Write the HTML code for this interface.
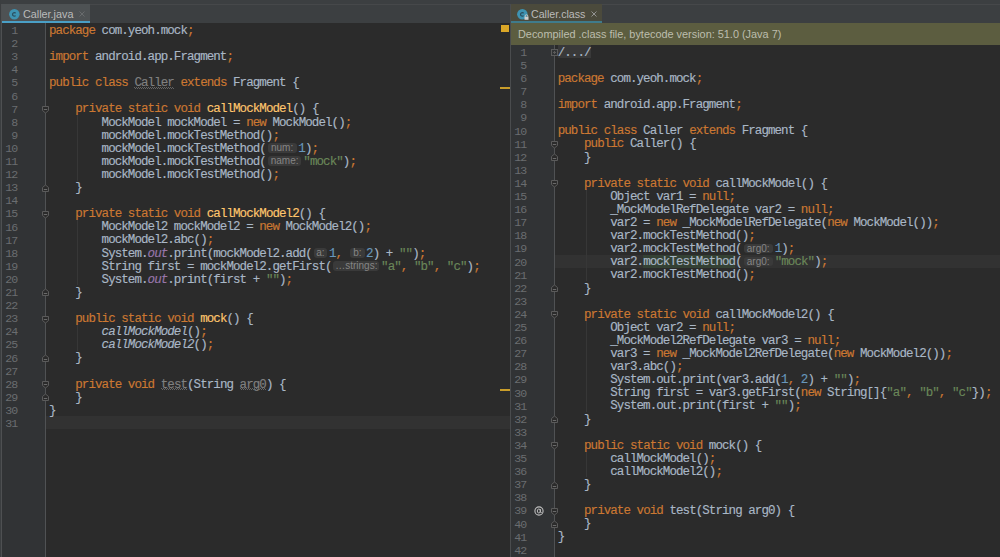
<!DOCTYPE html><html><head><meta charset="utf-8"><style>
*{margin:0;padding:0;box-sizing:border-box}
html,body{width:1000px;height:557px;overflow:hidden;background:#2b2b2b}
body{position:relative;font-family:"Liberation Mono",monospace}
.abs{position:absolute}
.ln{position:absolute;z-index:2;white-space:pre;font-family:"Liberation Mono",monospace;font-size:12.50px;letter-spacing:-0.930px;line-height:13px;height:13px;color:#a9b7c6;margin-top:1.50px;-webkit-text-stroke:0.15px}
.num{position:absolute;width:15px;text-align:right;font-family:"Liberation Mono",monospace;font-size:11.6px;letter-spacing:-1.1px;line-height:13px;color:#6a6d70;margin-top:0.8px}
.k{color:#cc7832}.m{color:#ffc66d}.s{color:#6a8759}.n{color:#6897bb}
.f{color:#9876aa;font-style:italic}.i{font-style:italic}
.u{color:#808080;position:relative}
.u::after{content:'';position:absolute;left:0;right:0;top:10.5px;height:2px;background-image:repeating-linear-gradient(90deg,#646464 0 1px,transparent 1px 2px),repeating-linear-gradient(90deg,transparent 0 1px,#646464 1px 2px);background-size:100% 1px,100% 1px;background-position:0 0,0 1px;background-repeat:no-repeat}
.hl{}
.fold{}
.h{display:inline-block;position:relative;height:1px;vertical-align:baseline}
.h i{position:absolute;top:-7.5px;height:9.5px;line-height:10.4px;background:#3a3a3a;border-radius:3px;color:#858585;font-family:"Liberation Sans",sans-serif;font-style:normal;font-size:10px;letter-spacing:0;text-align:center;-webkit-text-stroke:0}
.caret{position:absolute;background:#323232}
.guide{position:absolute;width:1px;background:#373737}
.mk{position:absolute}
</style></head><body>
<div class="abs" style="left:0;top:0;width:1000px;height:23px;background:#3c3f41"></div>
<div class="abs" style="left:0;top:4px;width:1000px;height:1px;background:#46484a"></div>
<div class="abs" style="left:0;top:0;width:1px;height:557px;background:#3b3e40"></div>
<div class="abs" style="left:1px;top:4px;width:1px;height:553px;background:#4e5052"></div>
<div class="abs" style="left:2px;top:4px;width:88px;height:19px;background:#4e5254"></div>
<div class="abs" style="left:2px;top:21px;width:88px;height:2px;background:#4a9fc6"></div>
<div class="abs" style="left:2px;top:23px;width:43px;height:534px;background:#313335"></div>
<div class="abs" style="left:45px;top:23px;width:1px;height:534px;background:#505254"></div>
<svg class="abs" style="left:8.5px;top:8.5px" width="11" height="11" viewBox="0 0 11 11"><circle cx="5.35" cy="5.3" r="5.25" fill="#3e93b2"/><path d="M6.6 4.2A1.75 1.75 0 1 0 6.6 6.6" fill="none" stroke="#2a4f60" stroke-width="1.3"/></svg>
<div class="abs" style="left:23px;top:8.2px;font-family:'Liberation Sans';font-size:10.8px;line-height:13px;color:#bbbbbb">Caller.java</div>
<svg class="abs" style="left:78.5px;top:11.0px" width="6" height="6" viewBox="0 0 6 6"><path d="M0.5 0.5L5.5 5.5M5.5 0.5L0.5 5.5" stroke="#6b6e70" stroke-width="0.9"/></svg>
<div class="abs" style="left:501px;top:25px;width:8px;height:7px;background:#dba727"></div>
<div class="abs" style="left:500px;top:87px;width:10px;height:2px;background:#c99d2a"></div>
<div class="abs" style="left:500px;top:388.5px;width:10px;height:2px;background:#c99d2a"></div>
<div class="abs" style="left:510px;top:4px;width:1px;height:553px;background:#4a4c4e"></div>
<div class="abs" style="left:511px;top:4px;width:91px;height:19px;background:#4b4a3c"></div>
<div class="abs" style="left:511px;top:21px;width:91px;height:2px;background:#3f7b8b"></div>
<div class="abs" style="left:511px;top:23px;width:489px;height:22px;background:#5c5d40"></div>
<div class="abs" style="left:518px;top:27.5px;font-family:'Liberation Sans';font-size:10.9px;line-height:13px;color:#bdbdae;white-space:pre">Decompiled .class file, bytecode version: 51.0 (Java 7)</div>
<div class="abs" style="left:511px;top:45px;width:43px;height:512px;background:#313335"></div>
<div class="abs" style="left:554px;top:45px;width:1px;height:512px;background:#505254"></div>
<svg class="abs" style="left:517.0px;top:8.5px" width="11" height="11" viewBox="0 0 11 11"><circle cx="5.35" cy="5.3" r="5.25" fill="#3e93b2"/><path d="M6.6 4.2A1.75 1.75 0 1 0 6.6 6.6" fill="none" stroke="#2a4f60" stroke-width="1.3"/></svg>
<svg class="abs" style="left:524px;top:14px" width="5" height="6" viewBox="0 0 5 6"><path d="M1.2 3V2A1.3 1.3 0 0 1 3.8 2V3" fill="none" stroke="#c9c9c9" stroke-width="0.9"/><rect x="0.5" y="2.8" width="4" height="3" fill="#d0d0d0"/></svg>
<div class="abs" style="left:531px;top:8.2px;font-family:'Liberation Sans';font-size:10.65px;line-height:13px;color:#bbbbbb">Caller.class</div>
<svg class="abs" style="left:591.0px;top:11.3px" width="6" height="6" viewBox="0 0 6 6"><path d="M0.5 0.5L5.5 5.5M5.5 0.5L0.5 5.5" stroke="#9c9c9c" stroke-width="0.9"/></svg>
<div class="caret" style="left:46px;top:416.30px;width:464px;height:13.10px"></div>
<div class="guide" style="left:77.3px;top:115.00px;height:65.50px"></div>
<div class="guide" style="left:77.3px;top:219.80px;height:65.50px"></div>
<div class="guide" style="left:77.3px;top:324.60px;height:26.20px"></div>
<div class="num" style="left:2px;top:23.30px">1</div>
<div class="ln" style="left:49.00px;top:23.30px"><span class="k">package</span> com.yeoh.mock<span class="k">;</span></div>
<div class="num" style="left:2px;top:36.40px">2</div>
<div class="num" style="left:2px;top:49.50px">3</div>
<div class="ln" style="left:49.00px;top:49.50px"><span class="k">import</span> android.app.Fragment<span class="k">;</span></div>
<div class="num" style="left:2px;top:62.60px">4</div>
<div class="num" style="left:2px;top:75.70px">5</div>
<div class="ln" style="left:49.00px;top:75.70px"><span class="k">public class</span> <span class="u">Caller</span> <span class="k">extends</span> Fragment {</div>
<div class="num" style="left:2px;top:88.80px">6</div>
<div class="num" style="left:2px;top:101.90px">7</div>
<div class="ln" style="left:49.00px;top:101.90px">    <span class="k">private static void</span> <span class="m">callMockModel</span>() {</div>
<div class="num" style="left:2px;top:115.00px">8</div>
<div class="ln" style="left:49.00px;top:115.00px">        MockModel mockModel = <span class="k">new</span> MockModel()<span class="k">;</span></div>
<div class="num" style="left:2px;top:128.10px">9</div>
<div class="ln" style="left:49.00px;top:128.10px">        mockModel.mockTestMethod()<span class="k">;</span></div>
<div class="num" style="left:2px;top:141.20px">10</div>
<div class="ln" style="left:49.00px;top:141.20px">        mockModel.mockTestMethod(<span class="h" style="width:32.50px"><i style="left:1.65px;width:29.20px">num:</i></span><span class="n">1</span>)<span class="k">;</span></div>
<div class="num" style="left:2px;top:154.30px">11</div>
<div class="ln" style="left:49.00px;top:154.30px">        mockModel.mockTestMethod(<span class="h" style="width:37.50px"><i style="left:1.95px;width:33.60px">name:</i></span><span class="s">"mock"</span>)<span class="k">;</span></div>
<div class="num" style="left:2px;top:167.40px">12</div>
<div class="ln" style="left:49.00px;top:167.40px">        mockModel.mockTestMethod()<span class="k">;</span></div>
<div class="num" style="left:2px;top:180.50px">13</div>
<div class="ln" style="left:49.00px;top:180.50px">    }</div>
<div class="num" style="left:2px;top:193.60px">14</div>
<div class="num" style="left:2px;top:206.70px">15</div>
<div class="ln" style="left:49.00px;top:206.70px">    <span class="k">private static void</span> <span class="m">callMockModel2</span>() {</div>
<div class="num" style="left:2px;top:219.80px">16</div>
<div class="ln" style="left:49.00px;top:219.80px">        MockModel2 mockModel2 = <span class="k">new</span> MockModel2()<span class="k">;</span></div>
<div class="num" style="left:2px;top:232.90px">17</div>
<div class="ln" style="left:49.00px;top:232.90px">        mockModel2.abc()<span class="k">;</span></div>
<div class="num" style="left:2px;top:246.00px">18</div>
<div class="ln" style="left:49.00px;top:246.00px">        System.<span class="f">out</span>.print(mockModel2.add(<span class="h" style="width:17.00px"><i style="left:1.70px;width:13.60px">a:</i></span><span class="n">1</span><span class="k">,</span> <span class="h" style="width:17.50px"><i style="left:1.55px;width:14.40px">b:</i></span><span class="n">2</span>) + <span class="s">""</span>)<span class="k">;</span></div>
<div class="num" style="left:2px;top:259.10px">19</div>
<div class="ln" style="left:49.00px;top:259.10px">        String first = mockModel2.getFirst(<span class="h" style="width:49.50px"><i style="left:1.75px;width:46.00px">…strings:</i></span><span class="s">"a"</span><span class="k">,</span> <span class="s">"b"</span><span class="k">,</span> <span class="s">"c"</span>)<span class="k">;</span></div>
<div class="num" style="left:2px;top:272.20px">20</div>
<div class="ln" style="left:49.00px;top:272.20px">        System.<span class="f">out</span>.print(first + <span class="s">""</span>)<span class="k">;</span></div>
<div class="num" style="left:2px;top:285.30px">21</div>
<div class="ln" style="left:49.00px;top:285.30px">    }</div>
<div class="num" style="left:2px;top:298.40px">22</div>
<div class="num" style="left:2px;top:311.50px">23</div>
<div class="ln" style="left:49.00px;top:311.50px">    <span class="k">public static void</span> <span class="m">mock</span>() {</div>
<div class="num" style="left:2px;top:324.60px">24</div>
<div class="ln" style="left:49.00px;top:324.60px">        <span class="i">callMockModel</span>()<span class="k">;</span></div>
<div class="num" style="left:2px;top:337.70px">25</div>
<div class="ln" style="left:49.00px;top:337.70px">        <span class="i">callMockModel2</span>()<span class="k">;</span></div>
<div class="num" style="left:2px;top:350.80px">26</div>
<div class="ln" style="left:49.00px;top:350.80px">    }</div>
<div class="num" style="left:2px;top:363.90px">27</div>
<div class="num" style="left:2px;top:377.00px">28</div>
<div class="ln" style="left:49.00px;top:377.00px">    <span class="k">private void</span> <span class="u">test</span>(String <span class="u">arg0</span>) {</div>
<div class="num" style="left:2px;top:390.10px">29</div>
<div class="ln" style="left:49.00px;top:390.10px">    }</div>
<div class="num" style="left:2px;top:403.20px">30</div>
<div class="ln" style="left:49.00px;top:403.20px">}</div>
<div class="num" style="left:2px;top:416.30px">31</div>
<svg class="mk" style="left:41.0px;top:104.9px" width="9" height="9" viewBox="0 0 9 9"><path d="M1.5 1.5H7.5V5.5L4.5 8L1.5 5.5Z" fill="#2b2b2b" stroke="#5b5b5b" stroke-width="1"/><path d="M2.8 4.5H6.2" stroke="#6a6a6a"/></svg>
<svg class="mk" style="left:41.0px;top:183.5px" width="9" height="9" viewBox="0 0 9 9"><path d="M1.5 7.5H7.5V3.5L4.5 1L1.5 3.5Z" fill="#2b2b2b" stroke="#5b5b5b" stroke-width="1"/><path d="M2.8 5.5H6.2" stroke="#6a6a6a"/></svg>
<svg class="mk" style="left:41.0px;top:209.7px" width="9" height="9" viewBox="0 0 9 9"><path d="M1.5 1.5H7.5V5.5L4.5 8L1.5 5.5Z" fill="#2b2b2b" stroke="#5b5b5b" stroke-width="1"/><path d="M2.8 4.5H6.2" stroke="#6a6a6a"/></svg>
<svg class="mk" style="left:41.0px;top:288.3px" width="9" height="9" viewBox="0 0 9 9"><path d="M1.5 7.5H7.5V3.5L4.5 1L1.5 3.5Z" fill="#2b2b2b" stroke="#5b5b5b" stroke-width="1"/><path d="M2.8 5.5H6.2" stroke="#6a6a6a"/></svg>
<svg class="mk" style="left:41.0px;top:314.5px" width="9" height="9" viewBox="0 0 9 9"><path d="M1.5 1.5H7.5V5.5L4.5 8L1.5 5.5Z" fill="#2b2b2b" stroke="#5b5b5b" stroke-width="1"/><path d="M2.8 4.5H6.2" stroke="#6a6a6a"/></svg>
<svg class="mk" style="left:41.0px;top:353.8px" width="9" height="9" viewBox="0 0 9 9"><path d="M1.5 7.5H7.5V3.5L4.5 1L1.5 3.5Z" fill="#2b2b2b" stroke="#5b5b5b" stroke-width="1"/><path d="M2.8 5.5H6.2" stroke="#6a6a6a"/></svg>
<svg class="mk" style="left:41.0px;top:380.0px" width="9" height="9" viewBox="0 0 9 9"><path d="M1.5 1.5H7.5V5.5L4.5 8L1.5 5.5Z" fill="#2b2b2b" stroke="#5b5b5b" stroke-width="1"/><path d="M2.8 4.5H6.2" stroke="#6a6a6a"/></svg>
<svg class="mk" style="left:41.0px;top:393.1px" width="9" height="9" viewBox="0 0 9 9"><path d="M1.5 7.5H7.5V3.5L4.5 1L1.5 3.5Z" fill="#2b2b2b" stroke="#5b5b5b" stroke-width="1"/><path d="M2.8 5.5H6.2" stroke="#6a6a6a"/></svg>
<div class="abs" style="left:558px;top:45.2px;width:33px;height:12.8px;background:#393939;z-index:1"></div>
<div class="abs" style="left:643.11px;top:255.10px;width:91.98px;height:12.80px;background:#344134;z-index:1"></div>
<div class="caret" style="left:555px;top:254.80px;width:445px;height:13.10px"></div>
<div class="guide" style="left:586.0px;top:189.30px;height:91.70px"></div>
<div class="guide" style="left:586.0px;top:320.30px;height:91.70px"></div>
<div class="guide" style="left:586.0px;top:451.30px;height:26.20px"></div>
<div class="num" style="left:511px;top:45.20px">1</div>
<div class="ln" style="left:557.70px;top:45.20px"><span class="fold">/.../</span></div>
<div class="num" style="left:511px;top:58.30px">5</div>
<div class="num" style="left:511px;top:71.40px">6</div>
<div class="ln" style="left:557.70px;top:71.40px"><span class="k">package</span> com.yeoh.mock<span class="k">;</span></div>
<div class="num" style="left:511px;top:84.50px">7</div>
<div class="num" style="left:511px;top:97.60px">8</div>
<div class="ln" style="left:557.70px;top:97.60px"><span class="k">import</span> android.app.Fragment<span class="k">;</span></div>
<div class="num" style="left:511px;top:110.70px">9</div>
<div class="num" style="left:511px;top:123.80px">10</div>
<div class="ln" style="left:557.70px;top:123.80px"><span class="k">public class</span> Caller <span class="k">extends</span> Fragment {</div>
<div class="num" style="left:511px;top:136.90px">11</div>
<div class="ln" style="left:557.70px;top:136.90px">    <span class="k">public</span> Caller() {</div>
<div class="num" style="left:511px;top:150.00px">12</div>
<div class="ln" style="left:557.70px;top:150.00px">    }</div>
<div class="num" style="left:511px;top:163.10px">13</div>
<div class="num" style="left:511px;top:176.20px">14</div>
<div class="ln" style="left:557.70px;top:176.20px">    <span class="k">private static void</span> callMockModel() {</div>
<div class="num" style="left:511px;top:189.30px">15</div>
<div class="ln" style="left:557.70px;top:189.30px">        Object var1 = <span class="k">null;</span></div>
<div class="num" style="left:511px;top:202.40px">16</div>
<div class="ln" style="left:557.70px;top:202.40px">        _MockModelRefDelegate var2 = <span class="k">null;</span></div>
<div class="num" style="left:511px;top:215.50px">17</div>
<div class="ln" style="left:557.70px;top:215.50px">        var2 = <span class="k">new</span> _MockModelRefDelegate(<span class="k">new</span> MockModel())<span class="k">;</span></div>
<div class="num" style="left:511px;top:228.60px">18</div>
<div class="ln" style="left:557.70px;top:228.60px">        var2.mockTestMethod()<span class="k">;</span></div>
<div class="num" style="left:511px;top:241.70px">19</div>
<div class="ln" style="left:557.70px;top:241.70px">        var2.mockTestMethod(<span class="h" style="width:33.00px"><i style="left:2.00px;width:29.00px">arg0:</i></span><span class="n">1</span>)<span class="k">;</span></div>
<div class="num" style="left:511px;top:254.80px">20</div>
<div class="ln" style="left:557.70px;top:254.80px">        var2.<span class="hl">mockTestMethod</span>(<span class="h" style="width:33.00px"><i style="left:2.00px;width:29.00px">arg0:</i></span><span class="s">"mock"</span>)<span class="k">;</span></div>
<div class="num" style="left:511px;top:267.90px">21</div>
<div class="ln" style="left:557.70px;top:267.90px">        var2.mockTestMethod()<span class="k">;</span></div>
<div class="num" style="left:511px;top:281.00px">22</div>
<div class="ln" style="left:557.70px;top:281.00px">    }</div>
<div class="num" style="left:511px;top:294.10px">23</div>
<div class="num" style="left:511px;top:307.20px">24</div>
<div class="ln" style="left:557.70px;top:307.20px">    <span class="k">private static void</span> callMockModel2() {</div>
<div class="num" style="left:511px;top:320.30px">25</div>
<div class="ln" style="left:557.70px;top:320.30px">        Object var2 = <span class="k">null;</span></div>
<div class="num" style="left:511px;top:333.40px">26</div>
<div class="ln" style="left:557.70px;top:333.40px">        _MockModel2RefDelegate var3 = <span class="k">null;</span></div>
<div class="num" style="left:511px;top:346.50px">27</div>
<div class="ln" style="left:557.70px;top:346.50px">        var3 = <span class="k">new</span> _MockModel2RefDelegate(<span class="k">new</span> MockModel2())<span class="k">;</span></div>
<div class="num" style="left:511px;top:359.60px">28</div>
<div class="ln" style="left:557.70px;top:359.60px">        var3.abc()<span class="k">;</span></div>
<div class="num" style="left:511px;top:372.70px">29</div>
<div class="ln" style="left:557.70px;top:372.70px">        System.out.print(var3.add(<span class="n">1</span><span class="k">,</span> <span class="n">2</span>) + <span class="s">""</span>)<span class="k">;</span></div>
<div class="num" style="left:511px;top:385.80px">30</div>
<div class="ln" style="left:557.70px;top:385.80px">        String first = var3.getFirst(<span class="k">new</span> String[]{<span class="s">"a"</span><span class="k">,</span> <span class="s">"b"</span><span class="k">,</span> <span class="s">"c"</span>})<span class="k">;</span></div>
<div class="num" style="left:511px;top:398.90px">31</div>
<div class="ln" style="left:557.70px;top:398.90px">        System.out.print(first + <span class="s">""</span>)<span class="k">;</span></div>
<div class="num" style="left:511px;top:412.00px">32</div>
<div class="ln" style="left:557.70px;top:412.00px">    }</div>
<div class="num" style="left:511px;top:425.10px">33</div>
<div class="num" style="left:511px;top:438.20px">34</div>
<div class="ln" style="left:557.70px;top:438.20px">    <span class="k">public static void</span> mock() {</div>
<div class="num" style="left:511px;top:451.30px">35</div>
<div class="ln" style="left:557.70px;top:451.30px">        callMockModel()<span class="k">;</span></div>
<div class="num" style="left:511px;top:464.40px">36</div>
<div class="ln" style="left:557.70px;top:464.40px">        callMockModel2()<span class="k">;</span></div>
<div class="num" style="left:511px;top:477.50px">37</div>
<div class="ln" style="left:557.70px;top:477.50px">    }</div>
<div class="num" style="left:511px;top:490.60px">38</div>
<div class="num" style="left:511px;top:503.70px">39</div>
<div class="ln" style="left:557.70px;top:503.70px">    <span class="k">private void</span> test(String arg0) {</div>
<div class="num" style="left:511px;top:516.80px">40</div>
<div class="ln" style="left:557.70px;top:516.80px">    }</div>
<div class="num" style="left:511px;top:529.90px">41</div>
<div class="ln" style="left:557.70px;top:529.90px">}</div>
<div class="num" style="left:511px;top:543.00px">42</div>
<svg class="mk" style="left:550.0px;top:48.2px" width="9" height="9" viewBox="0 0 9 9"><rect x="1.5" y="1.5" width="6" height="6" fill="#313335" stroke="#5b5b5b"/><path d="M3 4.5H6M4.5 3V6" stroke="#5b5b5b"/></svg>
<svg class="mk" style="left:550.0px;top:139.9px" width="9" height="9" viewBox="0 0 9 9"><path d="M1.5 1.5H7.5V5.5L4.5 8L1.5 5.5Z" fill="#2b2b2b" stroke="#5b5b5b" stroke-width="1"/><path d="M2.8 4.5H6.2" stroke="#6a6a6a"/></svg>
<svg class="mk" style="left:550.0px;top:153.0px" width="9" height="9" viewBox="0 0 9 9"><path d="M1.5 7.5H7.5V3.5L4.5 1L1.5 3.5Z" fill="#2b2b2b" stroke="#5b5b5b" stroke-width="1"/><path d="M2.8 5.5H6.2" stroke="#6a6a6a"/></svg>
<svg class="mk" style="left:550.0px;top:179.2px" width="9" height="9" viewBox="0 0 9 9"><path d="M1.5 1.5H7.5V5.5L4.5 8L1.5 5.5Z" fill="#2b2b2b" stroke="#5b5b5b" stroke-width="1"/><path d="M2.8 4.5H6.2" stroke="#6a6a6a"/></svg>
<svg class="mk" style="left:550.0px;top:284.0px" width="9" height="9" viewBox="0 0 9 9"><path d="M1.5 7.5H7.5V3.5L4.5 1L1.5 3.5Z" fill="#2b2b2b" stroke="#5b5b5b" stroke-width="1"/><path d="M2.8 5.5H6.2" stroke="#6a6a6a"/></svg>
<svg class="mk" style="left:550.0px;top:310.2px" width="9" height="9" viewBox="0 0 9 9"><path d="M1.5 1.5H7.5V5.5L4.5 8L1.5 5.5Z" fill="#2b2b2b" stroke="#5b5b5b" stroke-width="1"/><path d="M2.8 4.5H6.2" stroke="#6a6a6a"/></svg>
<svg class="mk" style="left:550.0px;top:415.0px" width="9" height="9" viewBox="0 0 9 9"><path d="M1.5 7.5H7.5V3.5L4.5 1L1.5 3.5Z" fill="#2b2b2b" stroke="#5b5b5b" stroke-width="1"/><path d="M2.8 5.5H6.2" stroke="#6a6a6a"/></svg>
<svg class="mk" style="left:550.0px;top:441.2px" width="9" height="9" viewBox="0 0 9 9"><path d="M1.5 1.5H7.5V5.5L4.5 8L1.5 5.5Z" fill="#2b2b2b" stroke="#5b5b5b" stroke-width="1"/><path d="M2.8 4.5H6.2" stroke="#6a6a6a"/></svg>
<svg class="mk" style="left:550.0px;top:480.5px" width="9" height="9" viewBox="0 0 9 9"><path d="M1.5 7.5H7.5V3.5L4.5 1L1.5 3.5Z" fill="#2b2b2b" stroke="#5b5b5b" stroke-width="1"/><path d="M2.8 5.5H6.2" stroke="#6a6a6a"/></svg>
<svg class="mk" style="left:550.0px;top:506.7px" width="9" height="9" viewBox="0 0 9 9"><path d="M1.5 1.5H7.5V5.5L4.5 8L1.5 5.5Z" fill="#2b2b2b" stroke="#5b5b5b" stroke-width="1"/><path d="M2.8 4.5H6.2" stroke="#6a6a6a"/></svg>
<svg class="mk" style="left:550.0px;top:519.8px" width="9" height="9" viewBox="0 0 9 9"><path d="M1.5 7.5H7.5V3.5L4.5 1L1.5 3.5Z" fill="#2b2b2b" stroke="#5b5b5b" stroke-width="1"/><path d="M2.8 5.5H6.2" stroke="#6a6a6a"/></svg>
<svg class="abs" style="left:533.5px;top:505.5px" width="10" height="10" viewBox="0 0 10 10"><circle cx="5" cy="5" r="4.1" fill="none" stroke="#bdbdbd" stroke-width="1.1"/><ellipse cx="4.8" cy="5" rx="1.5" ry="2" fill="none" stroke="#bdbdbd" stroke-width="1"/><path d="M6.4 3V6.3Q6.8 7.2 7.8 6.5" fill="none" stroke="#bdbdbd" stroke-width="0.9"/></svg>
</body></html>
